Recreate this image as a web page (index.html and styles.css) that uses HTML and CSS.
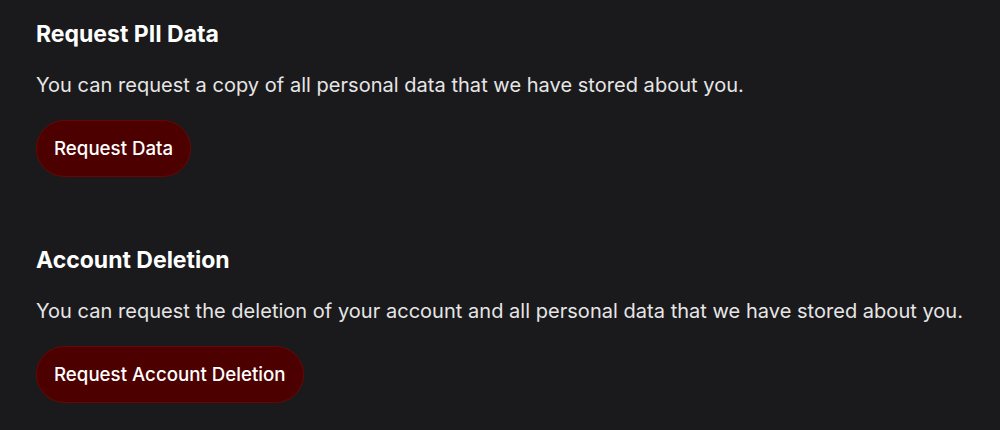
FILE: index.html
```html
<!DOCTYPE html>
<html>
<head>
<meta charset="utf-8">
<link rel="stylesheet" href="styles.css">
</head>
<body>
<main class="page">
  <section class="section">
    <h2 class="title">Request PII Data</h2>
    <p class="desc">You can request a copy of all personal data that we have stored about you.</p>
    <button class="btn">Request Data</button>
  </section>
  <section class="section">
    <h2 class="title">Account Deletion</h2>
    <p class="desc">You can request the deletion of your account and all personal data that we have stored about you.</p>
    <button class="btn">Request Account Deletion</button>
  </section>
</main>
</body>
</html>
```
FILE: styles.css
```css
html, body {
  margin: 0;
  padding: 0;
  background: #1a1a1c;
  height: 100%;
}
body {
  font-family: Inter, "Noto Sans", sans-serif;
  color: #e6e6e6;
}
.page {
  padding: 20px 36px 0;
  display: flex;
  flex-direction: column;
  gap: 69px;
}
.section {
  display: flex;
  flex-direction: column;
  align-items: flex-start;
}
.title {
  margin: 0;
  font-size: 23px;
  line-height: 28px;
  font-weight: 700;
  color: #ffffff;
}
.desc {
  margin: 23px 0 0;
  font-size: 20px;
  line-height: 28px;
  letter-spacing: 0.03px;
  color: #e6e6e6;
}
.btn {
  margin-top: 21px;
  height: 57px;
  padding: 0 17px;
  border-radius: 999px;
  border: 1px solid #6b0505;
  background: #4d0000;
  color: #ffffff;
  font-family: Inter, "Noto Sans", sans-serif;
  font-size: 18.7px;
  font-weight: 500;
}
```
